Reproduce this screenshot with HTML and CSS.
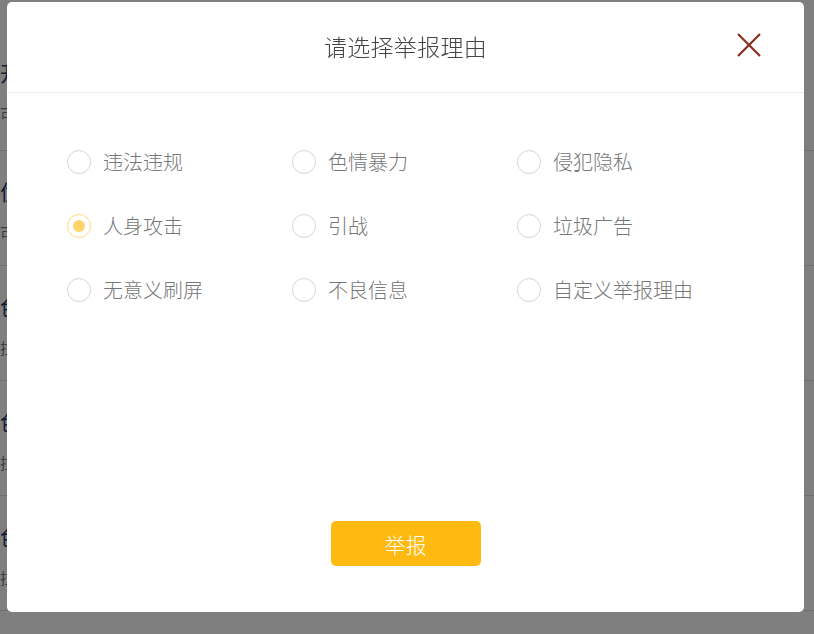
FILE: index.html
```html
<!DOCTYPE html>
<html lang="zh-CN">
<head>
    <meta charset="UTF-8">
    <meta name="viewport" content="width=device-width, initial-scale=1.0">
    <title>举报</title>
    <link rel="stylesheet" href="styles.css">
</head>
<body>
    <!-- 背景页面列表 -->
    <ul class="page-list">
        <li><div class="item-title">开发</div><div class="item-sub">可以</div></li>
        <li><div class="item-title">优质</div><div class="item-sub">可以</div></li>
        <li><div class="item-title">色彩</div><div class="item-sub">拉取</div></li>
        <li><div class="item-title">色彩</div><div class="item-sub">拉取</div></li>
        <li><div class="item-title">色彩</div><div class="item-sub">拉取</div></li>
    </ul>

    <div class="mask">
        <div class="dialog">
            <div class="dialog-header">
                <span class="dialog-title">请选择举报理由</span>
                <button class="dialog-close" aria-label="关闭">
                    <svg width="24" height="24" viewBox="0 0 24 24">
                        <path d="M1 1 L23 23 M23 1 L1 23" stroke="#8a2d1c" stroke-width="2.2" fill="none"/>
                    </svg>
                </button>
            </div>
            <div class="dialog-body">
                <div class="reason-grid" id="reasons"></div>
            </div>
            <div class="dialog-footer">
                <button class="btn-report">举报</button>
            </div>
        </div>
    </div>

    <script>
        const reasons = [
            "违法违规", "色情暴力", "侵犯隐私",
            "人身攻击", "引战", "垃圾广告",
            "无意义刷屏", "不良信息", "自定义举报理由"
        ];
        let selected = 3;
        const grid = document.getElementById("reasons");

        function render() {
            grid.innerHTML = "";
            reasons.forEach((text, i) => {
                const item = document.createElement("label");
                item.className = "reason" + (i === selected ? " checked" : "");
                item.innerHTML = `<span class="radio"></span><span class="reason-text">${text}</span>`;
                item.onclick = () => { selected = i; render(); };
                grid.appendChild(item);
            });
        }
        render();
    </script>
</body>
</html>
```

FILE: styles.css
```css
body {
    margin: 0;
    padding: 0;
    font-family: "Noto Sans CJK SC", "Noto Sans", sans-serif;
    background: #fff;
    overflow: hidden;
}
.page-list {
    list-style: none;
    margin: 0;
    padding: 0;
}
.page-list li {
    box-sizing: border-box;
    height: 115px;
    padding-top: 27px;
    border-bottom: 1px solid #ddd;
}
.page-list li:first-child {
    height: 151px;
    padding-top: 59px;
}
.item-title {
    font-size: 21px;
    line-height: 26px;
    color: #1d3a6e;
}
.item-sub {
    font-size: 15px;
    line-height: 22px;
    margin-top: 18px;
    color: #777;
}
.mask {
    position: fixed;
    inset: 0;
    background: rgba(0, 0, 0, 0.5);
}
.dialog {
    position: absolute;
    left: 7px;
    top: 2px;
    width: 797px;
    height: 610px;
    background: #fff;
    border-radius: 5px;
    display: flex;
    flex-direction: column;
}
.dialog-header {
    height: 90px;
    border-bottom: 1px solid #ececec;
    display: flex;
    align-items: center;
    justify-content: center;
    position: relative;
}
.dialog-title {
    font-size: 23px;
    font-weight: 300;
    color: #444;
    letter-spacing: 0.3px;
    margin-top: -2px;
}
.dialog-close {
    position: absolute;
    right: 43px;
    top: 31px;
    width: 24px;
    height: 24px;
    padding: 0;
    border: none;
    background: none;
    cursor: pointer;
}
.dialog-body {
    flex: 1;
    padding: 37px 60px 0 60px;
}
.reason-grid {
    display: grid;
    grid-template-columns: 225px 225px 225px;
    grid-auto-rows: 64px;
}
.reason {
    display: flex;
    align-items: center;
    cursor: pointer;
}
.radio {
    width: 22px;
    height: 22px;
    border: 1px solid #d6d6d6;
    border-radius: 50%;
    display: flex;
    align-items: center;
    justify-content: center;
    margin-right: 12px;
    flex-shrink: 0;
}
.reason.checked .radio {
    border-color: #ffd97e;
}
.reason.checked .radio::after {
    content: "";
    width: 12px;
    height: 12px;
    border-radius: 50%;
    background: #ffd46a;
}
.reason-text {
    font-size: 20px;
    font-weight: 300;
    color: #777;
    margin-top: -1px;
}
.dialog-footer {
    display: flex;
    justify-content: center;
    padding-bottom: 46px;
}
.btn-report {
    width: 150px;
    height: 45px;
    border: none;
    border-radius: 5px;
    background: #ffba12;
    color: #fff;
    font-family: "Noto Sans CJK SC", sans-serif;
    font-size: 21px;
    font-weight: 300;
    cursor: pointer;
}
```
